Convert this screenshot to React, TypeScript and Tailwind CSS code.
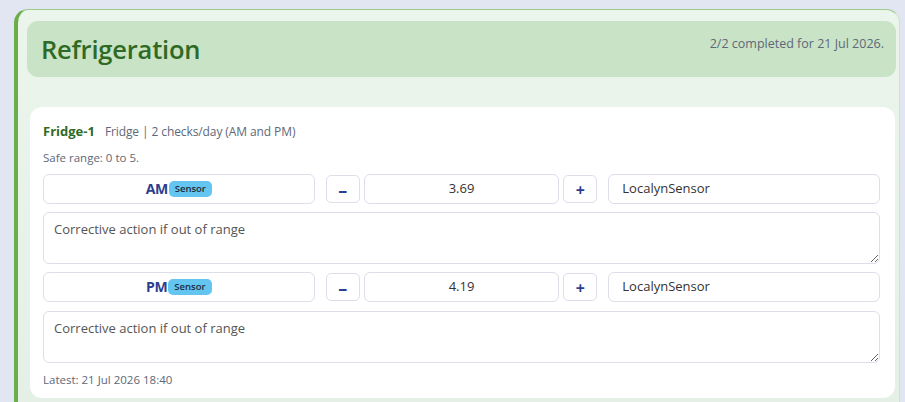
import { FC } from "react";

const font = { fontFamily: '"Open Sans", "Noto Sans", sans-serif' };

const Row: FC<{ label: string; value: string; last?: boolean }> = ({ label, value, last }) => (
  <>
    <div className="grid grid-cols-3 gap-[11px]">
      <div className="h-[30px] rounded-[6px] border border-[#dcdfe9] bg-white flex items-center justify-center">
        <span className="text-[14px] font-bold text-[#2d3e8e] tracking-[-0.4px]">{label}</span>
        <span className="ml-[1px] rounded-[5px] bg-[#64c5f0] px-[6px] h-[16px] flex items-center text-[9.5px] font-semibold text-[#1d2a3a]">
          Sensor
        </span>
      </div>
      <div className="flex items-center gap-[4px]">
        <button className="w-[34px] h-[28px] shrink-0 rounded-[5px] border border-[#dcdfe9] bg-white flex items-center justify-center text-[#2d3e8e] text-[18px] font-bold leading-none pt-[2px]">
          –
        </button>
        <div className="flex-1 h-[30px] rounded-[6px] border border-[#dcdfe9] bg-white flex items-center justify-center text-[13px] text-[#333]">
          {value}
        </div>
        <button className="w-[34px] h-[28px] shrink-0 rounded-[5px] border border-[#dcdfe9] bg-white flex items-center justify-center text-[#2d3e8e] text-[16px] font-bold leading-none pt-[2px]">
          +
        </button>
      </div>
      <div className="h-[30px] rounded-[6px] border border-[#dcdfe9] bg-white flex items-center px-[13px] text-[13px] text-[#333]">
        LocalynSensor
      </div>
    </div>
    <textarea
      className={
        "block w-full h-[52px] rounded-[6px] border border-[#dcdfe9] bg-white px-[10px] py-[7px] text-[13px] text-[#555] placeholder:text-[#555] outline-none" +
        (last ? " mt-[1px]" : "")
      }
      style={font}
      placeholder="Corrective action if out of range"
    />
  </>
);

export default function App() {
  return (
    <div className="w-[905px] h-[402px] overflow-hidden bg-[#e2e6f3] pt-[9px] pl-[14px] pr-[5px]" style={font}>
      <div className="h-[420px] rounded-t-[14px] border-l-[4px] border-t border-r border-[#6aae4a] border-t-[#9ccb8c] border-r-[#cfe3cc] bg-gradient-to-b from-[#ebf5eb] to-[#e4efe6] pt-[11px] pl-[9px] pr-[3px]">
        <div className="h-[56px] rounded-[11px] bg-[#c9e3c6] flex justify-between pl-[14px] pr-[12px]">
          <h1 className="text-[25.5px] font-semibold text-[#2f6a25] leading-none pt-[16px] tracking-[-0.2px]">Refrigeration</h1>
          <div className="text-[12.5px] text-[#5d6878] pt-[14px]">2/2 completed for 21 Jul 2026.</div>
        </div>
        <div className="mt-[30px] ml-[3px] mr-[1px] h-[291px] rounded-[12px] bg-white pl-[13px] pr-[15px] pt-[15px] flex flex-col">
          <div className="flex items-baseline gap-[10px]">
            <span className="text-[13px] font-bold text-[#2f6a25]">Fridge-1</span>
            <span className="text-[12px] text-[#5d6878] tracking-[-0.1px]">Fridge | 2 checks/day (AM and PM)</span>
          </div>
          <div className="text-[11.5px] text-[#5d6878] mt-[7px] mb-[8px]">Safe range: 0 to 5.</div>
          <div className="flex flex-col gap-[8px]">
            <Row label="AM" value="3.69" />
            <Row label="PM" value="4.19" last />
          </div>
          <div className="text-[11.5px] text-[#5d6878] mt-[8px]">Latest: 21 Jul 2026 18:40</div>
        </div>
      </div>
    </div>
  );
}
